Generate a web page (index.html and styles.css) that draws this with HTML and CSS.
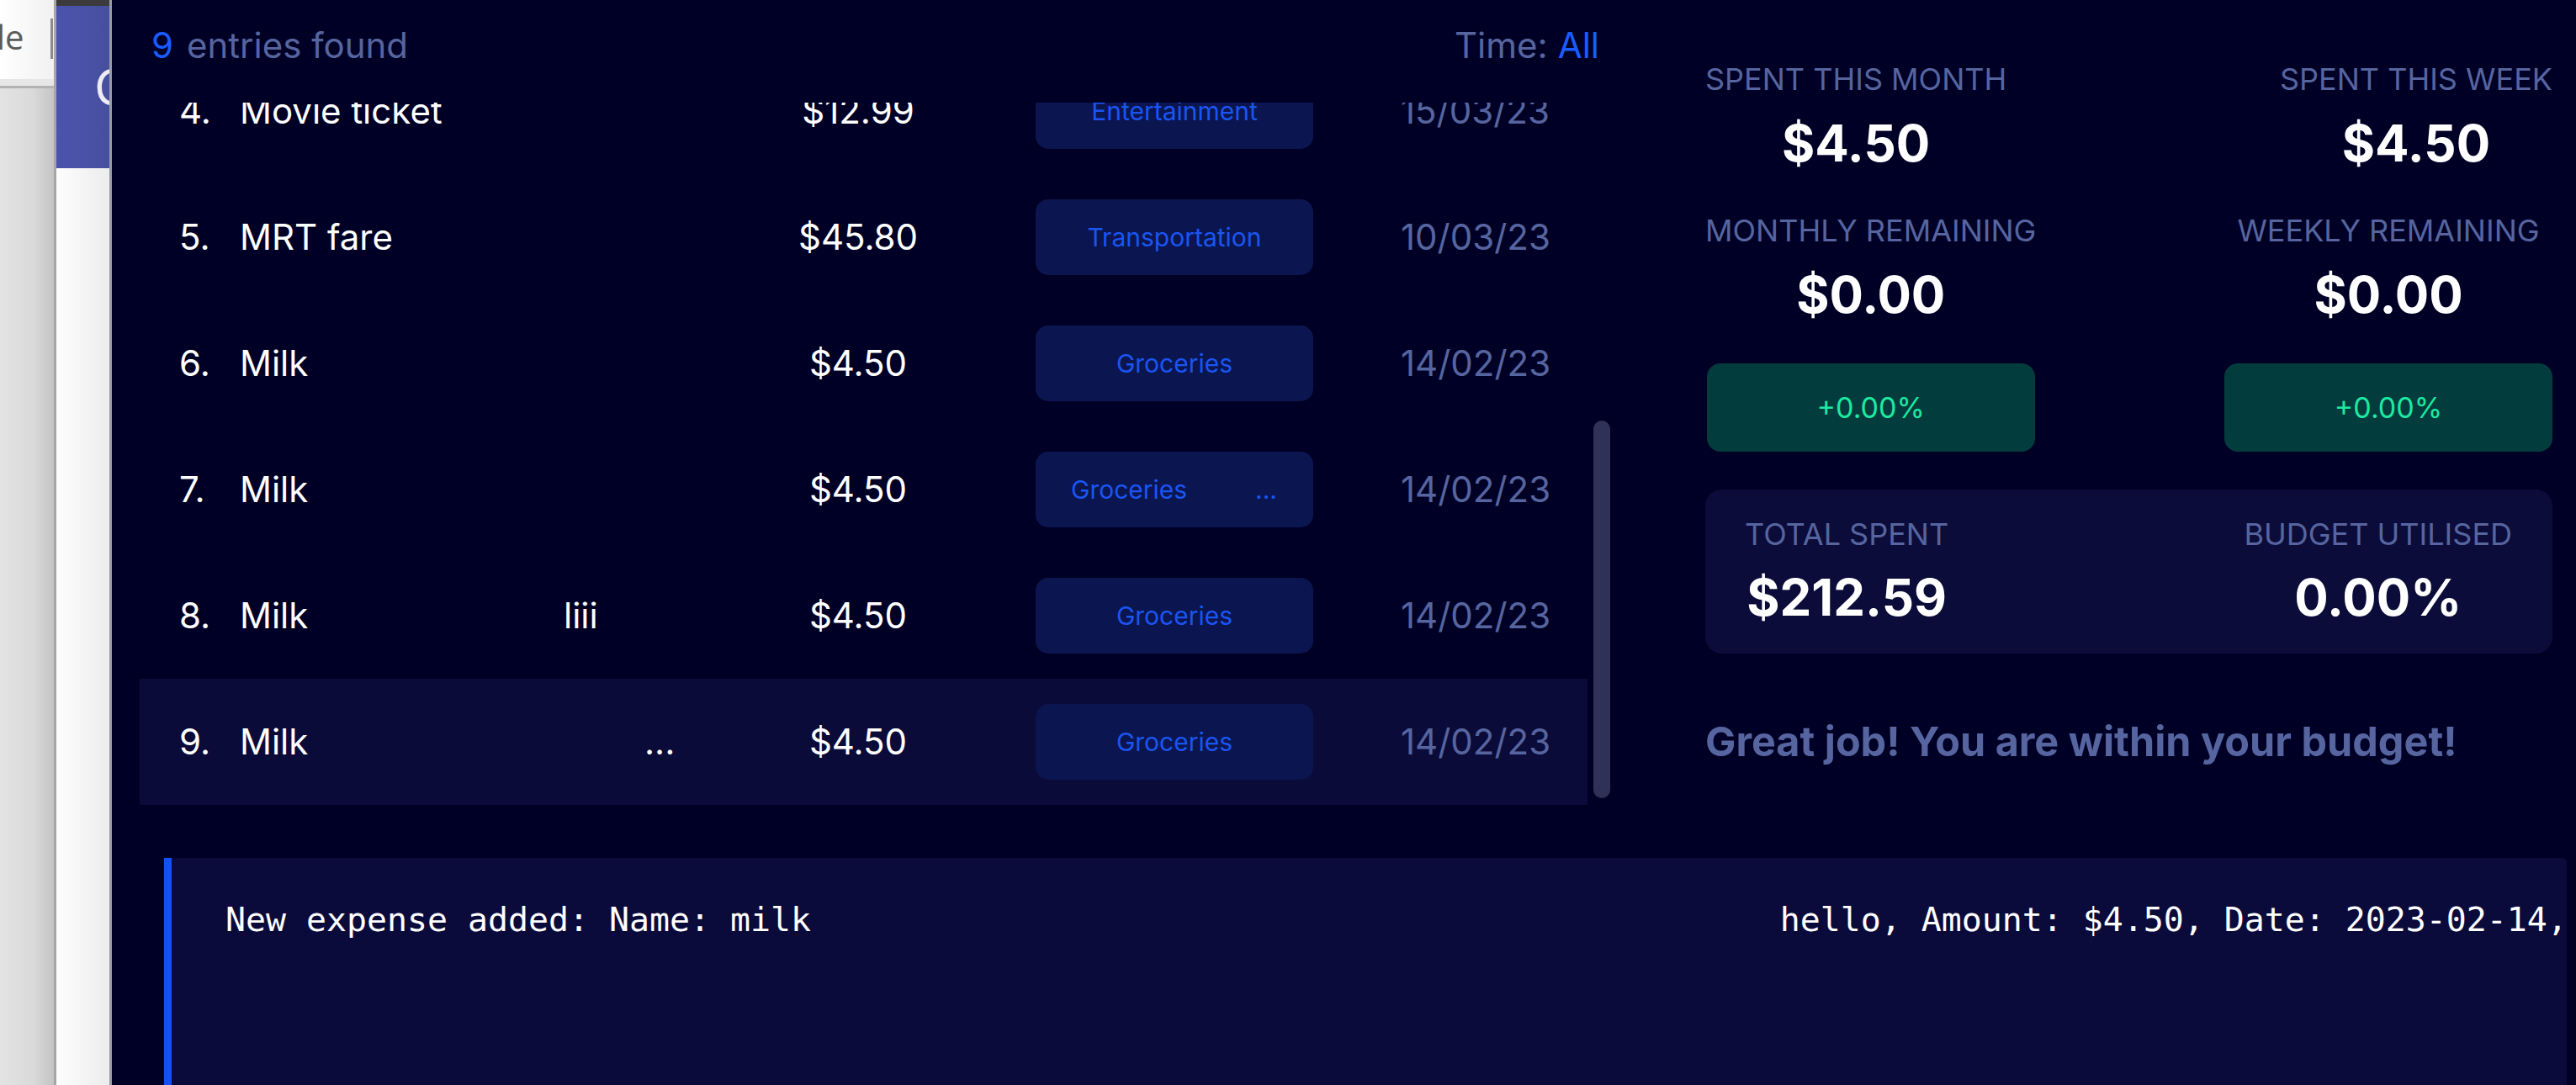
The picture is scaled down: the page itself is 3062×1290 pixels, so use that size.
FILE: index.html
```html
<!DOCTYPE html>
<html lang="en">
<head>
<meta charset="utf-8">
<title>Expense Tracker</title>
<link rel="stylesheet" href="styles.css">
</head>
<body>
<div class="screen">
  <div class="desk">
    <div class="desk-top">
      <span class="desk-text">le</span>
      <span class="desk-caret"></span>
    </div>
    <div class="desk-band"></div>
    <div class="desk-line"></div>
    <div class="desk-body"></div>
  </div>
  <div class="edge edge-a"></div>
  <div class="win">
    <div class="win-top"></div>
    <div class="win-head"><span class="win-letter">C</span></div>
    <div class="win-body"></div>
  </div>
  <div class="edge edge-b"></div>

  <div class="app">
    <div class="top">
      <section class="list-panel">
        <div class="list-head">
          <div class="count"><span class="accent">9</span><span class="muted count-label">entries found</span></div>
          <div class="time"><span class="muted">Time:</span><span class="accent time-val">All</span></div>
        </div>
        <div class="list-body">
          <div class="viewport">
            <div class="rows">
              <div class="row">
                <span class="num">4.</span><span class="name">Movie ticket</span><span class="desc"></span><span class="amt">$12.99</span><span class="gap"></span>
                <span class="badge">Entertainment</span><span class="date">15/03/23</span>
              </div>
              <div class="row">
                <span class="num">5.</span><span class="name">MRT fare</span><span class="desc"></span><span class="amt">$45.80</span><span class="gap"></span>
                <span class="badge">Transportation</span><span class="date">10/03/23</span>
              </div>
              <div class="row">
                <span class="num">6.</span><span class="name">Milk</span><span class="desc"></span><span class="amt">$4.50</span><span class="gap"></span>
                <span class="badge">Groceries</span><span class="date">14/02/23</span>
              </div>
              <div class="row">
                <span class="num">7.</span><span class="name">Milk</span><span class="desc"></span><span class="amt">$4.50</span><span class="gap"></span>
                <span class="badge badge-split"><span>Groceries</span><span>...</span></span><span class="date">14/02/23</span>
              </div>
              <div class="row">
                <span class="num">8.</span><span class="name">Milk</span><span class="desc">liii</span><span class="amt">$4.50</span><span class="gap"></span>
                <span class="badge">Groceries</span><span class="date">14/02/23</span>
              </div>
              <div class="row row-selected">
                <span class="num">9.</span><span class="name">Milk</span><span class="desc desc-trunc">...</span><span class="amt">$4.50</span><span class="gap"></span>
                <span class="badge">Groceries</span><span class="date">14/02/23</span>
              </div>
            </div>
          </div>
          <div class="scroll-track"><div class="scroll-thumb"></div></div>
        </div>
      </section>

      <aside class="stats">
        <div class="stat-row">
          <div class="stat">
            <div class="stat-label">Spent this month</div>
            <div class="stat-value">$4.50</div>
          </div>
          <div class="stat">
            <div class="stat-label">Spent this week</div>
            <div class="stat-value">$4.50</div>
          </div>
        </div>
        <div class="stat-row stat-row-second">
          <div class="stat">
            <div class="stat-label">Monthly remaining</div>
            <div class="stat-value">$0.00</div>
            <div class="change">+0.00%</div>
          </div>
          <div class="stat">
            <div class="stat-label">Weekly remaining</div>
            <div class="stat-value">$0.00</div>
            <div class="change">+0.00%</div>
          </div>
        </div>
        <div class="card">
          <div class="stat">
            <div class="stat-label">Total spent</div>
            <div class="card-value">$212.59</div>
          </div>
          <div class="stat">
            <div class="stat-label">Budget utilised</div>
            <div class="card-value">0.00%</div>
          </div>
        </div>
        <div class="message">Great job! You are within your budget!</div>
      </aside>
    </div>

    <div class="result">
      <div class="result-text">New expense added: Name: milk                                                hello, Amount: $4.50, Date: 2023-02-14, Category: Groceries</div>
    </div>
  </div>
</div>
</body>
</html>
```

FILE: styles.css
```css
html, body {
  margin: 0;
  padding: 0;
}

body {
  width: 3062px;
  height: 1290px;
  overflow: hidden;
  background: #000026;
  font-family: "Inter", "Noto Sans", sans-serif;
}

.screen {
  display: flex;
  height: 1290px;
}

/* ---------- left desktop strip ---------- */
.desk {
  width: 64px;
  display: flex;
  flex-direction: column;
  flex-shrink: 0;
  overflow: hidden;
}

.desk-top {
  height: 94px;
  background: linear-gradient(90deg, #ffffff 0%, #f1f1f1 100%);
  display: flex;
  align-items: flex-start;
}

.desk-text {
  margin-left: -4px;
  margin-top: 16px;
  font-family: "Open Sans", "Noto Sans", sans-serif;
  font-size: 40px;
  line-height: 56px;
  color: #5c5c5c;
}

.desk-caret {
  width: 3px;
  height: 48px;
  margin-top: 22px;
  margin-left: auto;
  margin-right: 1px;
  background: #8a8a8a;
}

.desk-band {
  height: 8px;
  background: #e6e6e6;
}

.desk-line {
  height: 3px;
  background: #b2b2b2;
}

.desk-body {
  flex: 1;
  background: linear-gradient(90deg, #e3e3e3 0%, #dadada 60%, #c4c4c4 100%);
}

.edge {
  width: 3px;
  flex-shrink: 0;
}

.edge-a {
  background: #a6a6a6;
}

.edge-b {
  background: #9a9aa6;
}

.win {
  width: 63px;
  display: flex;
  flex-direction: column;
  flex-shrink: 0;
  overflow: hidden;
}

.win-top {
  height: 7px;
  background: #3b3b3d;
}

.win-head {
  height: 193px;
  background: linear-gradient(90deg, #4a54ac 0%, #474f9e 100%);
  display: flex;
  justify-content: flex-start;
  overflow: hidden;
}

.win-letter {
  margin-top: 55px;
  margin-left: 45px;
  font-family: "Open Sans", "Noto Sans", sans-serif;
  font-size: 60px;
  line-height: 80px;
  height: 80px;
  color: #ececf2;
  white-space: nowrap;
}

.win-body {
  flex: 1;
  background: linear-gradient(90deg, #fdfdfd 0%, #ececec 100%);
}

/* ---------- app ---------- */
.app {
  flex: 1;
  display: flex;
  flex-direction: column;
  background: #000026;
  min-width: 0;
}

.top {
  height: 1020px;
  display: flex;
  flex-shrink: 0;
}

.accent {
  color: #1a5cff;
}

.muted {
  color: #56659f;
}

/* list panel */
.list-panel {
  width: 1750px;
  padding-left: 33px;
  flex-shrink: 0;
}

.list-head {
  display: flex;
  justify-content: space-between;
  padding: 24px 15px 0 14px;
  font-size: 42px;
  line-height: 60px;
}

.count-label {
  margin-left: 16px;
}

.time-val {
  margin-left: 12px;
}

.list-body {
  margin-top: 38px;
  display: flex;
}

.viewport {
  width: 1721px;
  height: 835px;
  overflow: hidden;
}

.rows {
  margin-top: -65px;
}

.row {
  height: 150px;
  padding-left: 47px;
  display: grid;
  grid-template-columns: 72px 385px 270px 160px 131px 330px 1fr;
  align-items: center;
  font-size: 42px;
  line-height: 60px;
  color: #ffffff;
}

.row-selected {
  background: #0b0b39;
}

.amt {
  text-align: center;
}

.desc-trunc {
  padding-left: 96px;
}

.badge {
  height: 90px;
  border-radius: 15px;
  background: #0b154f;
  color: #1a55f2;
  font-size: 30px;
  line-height: 40px;
  display: flex;
  align-items: center;
  justify-content: center;
}

.badge-split {
  justify-content: space-between;
  padding: 0 43px 0 42px;
}

.date {
  padding-left: 104px;
  color: #56659f;
}

.scroll-track {
  width: 29px;
  padding-left: 7px;
  box-sizing: border-box;
}

.scroll-thumb {
  margin-top: 378px;
  width: 20px;
  height: 449px;
  border-radius: 10px;
  background: #303158;
}

/* stats panel */
.stats {
  width: 1007px;
  margin-left: 111px;
  padding-top: 72px;
  flex-shrink: 0;
}

.stat-row {
  display: flex;
  justify-content: space-between;
}

.stat-row-second {
  margin-top: 47px;
}

.stat {
  display: flex;
  flex-direction: column;
  align-items: center;
}

.stat-label {
  font-size: 36px;
  line-height: 44px;
  color: #56659f;
  text-transform: uppercase;
}

.stat-value {
  margin-top: 19px;
  font-size: 60px;
  line-height: 70px;
  font-weight: 700;
  color: #ffffff;
}

.change {
  margin-top: 47px;
  width: 390px;
  height: 105px;
  border-radius: 16px;
  background: #023c3d;
  color: #1de9a2;
  font-size: 34px;
  display: flex;
  align-items: center;
  justify-content: center;
}

.card {
  margin-top: 45px;
  height: 195px;
  box-sizing: border-box;
  padding: 31px 48px 0 47px;
  border-radius: 20px;
  background: #0c0c3a;
  display: flex;
  justify-content: space-between;
}

.card-value {
  margin-top: 18px;
  font-size: 60px;
  line-height: 70px;
  font-weight: 700;
  color: #ffffff;
}

.message {
  margin-top: 76px;
  font-size: 48.5px;
  line-height: 58px;
  font-weight: 700;
  color: #56659f;
}

/* result box */
.result {
  flex: 1;
  margin-left: 62px;
  margin-right: 11px;
  border-left: 9px solid #1450f2;
  border-top-right-radius: 6px;
  background: #0b0b3b;
  overflow: hidden;
}

.result-text {
  padding: 43px 0 0 64px;
  font-family: "DejaVu Sans Mono", "Liberation Mono", monospace;
  font-size: 39.87px;
  line-height: 60px;
  color: #ffffff;
  white-space: pre;
}
```
